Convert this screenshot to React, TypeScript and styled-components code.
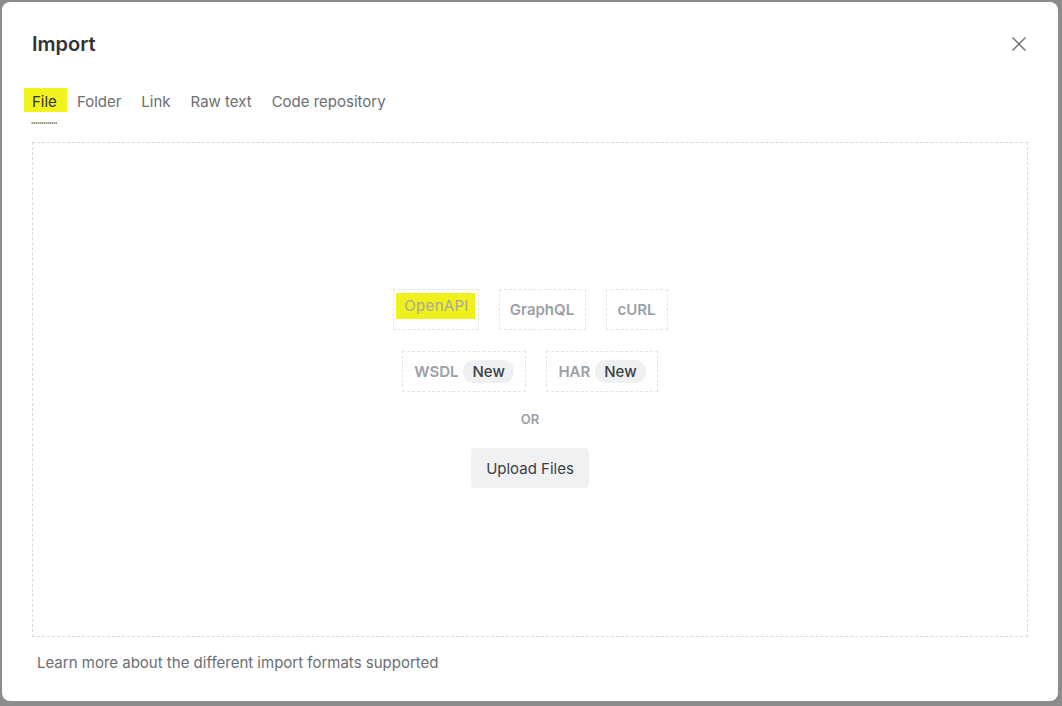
import React from "react";
import styled, { createGlobalStyle } from "styled-components";

const Global = createGlobalStyle`
  html, body { margin: 0; padding: 0; }
  body {
    width: 1062px;
    height: 706px;
    overflow: hidden;
    background: #ffffff;
    font-family: Inter, "Noto Sans", "Liberation Sans", sans-serif;
  }
  * { box-sizing: border-box; }
`;

const Page = styled.div`
  position: relative;
  width: 1062px;
  height: 706px;
  overflow: hidden;
`;

const Overlay = styled.div`
  position: absolute;
  inset: 0;
  background: rgba(0, 0, 0, 0.45);
  padding: 2px 4px 5px 2px;
  display: flex;
`;

const Modal = styled.div`
  flex: 1;
  background: #ffffff;
  border-radius: 8px;
  display: flex;
  flex-direction: column;
  padding: 0 30px 0 30px;
`;

const Header = styled.div`
  display: flex;
  align-items: center;
  justify-content: space-between;
  height: 82px;
  padding-top: 2px;
`;

const Title = styled.h2`
  margin: 0;
  font-size: 20px;
  font-weight: 600;
  color: #2f3338;
`;

const CloseButton = styled.button`
  border: none;
  background: none;
  padding: 0;
  width: 20px;
  height: 20px;
  display: flex;
  align-items: center;
  justify-content: center;
  margin-right: -1px;
  cursor: pointer;
`;

const Tabs = styled.div`
  display: flex;
  gap: 20px;
  height: 58px;
  align-items: flex-start;
  padding-top: 6px;
`;

const Tab = styled.div<{ $active?: boolean }>`
  position: relative;
  z-index: 0;
  font-size: 15px;
  color: ${(p) => (p.$active ? "#2f3338" : "#6b6e72")};
  padding-top: 2px;
  height: 34px;
  ${(p) =>
    p.$active &&
    `
    &::before {
      content: "";
      position: absolute;
      left: -8px;
      right: -10px;
      top: -2px;
      height: 24px;
      background: #f2f21c;
      z-index: -1;
    }
    &::after {
      content: "";
      position: absolute;
      left: -1px;
      right: 0;
      top: 32px;
      height: 2px;
      background: repeating-linear-gradient(90deg, #d8d86a 0 1px, #9a9a88 1px 2px);
    }
  `}
`;

const DropZone = styled.div`
  height: 495px;
  border: 1px dashed #d9d9d9;
  display: flex;
  flex-direction: column;
  align-items: center;
  justify-content: center;
  padding-bottom: 2px;
`;

const Row = styled.div`
  display: flex;
  gap: 20px;
  margin-bottom: 21px;
`;

const FormatButton = styled.div<{ $width: number }>`
  width: ${(p) => p.$width}px;
  height: 41px;
  border: 1px dashed #e4e4e4;
  display: flex;
  align-items: center;
  justify-content: center;
  gap: 5px;
  font-size: 15px;
  font-weight: 600;
  color: #9aa0a6;
`;

const Highlight = styled.span`
  background: #f0f01a;
  color: #a8a8a0;
  font-weight: 400;
  padding: 3px 6px 4px 8px;
  margin-top: -8px;
  letter-spacing: 0.3px;
`;

const Badge = styled.span`
  background: #eef0f2;
  color: #3a3f45;
  font-weight: 500;
  font-size: 15px;
  border-radius: 11px;
  padding: 2px 9px;
`;

const OrLabel = styled.div`
  font-size: 13px;
  font-weight: 600;
  color: #9aa0a6;
  margin-top: -2px;
  margin-bottom: 21px;
`;

const UploadButton = styled.button`
  width: 118px;
  height: 40px;
  border: none;
  border-radius: 4px;
  background: #f0f1f2;
  font-family: inherit;
  font-size: 15px;
  color: #3a3f45;
  cursor: pointer;
`;

const Footer = styled.div`
  padding: 16px 0 0 5px;
  font-size: 15px;
  color: #6b6e72;
`;

export default function App() {
  return (
    <Page>
      <Global />
      <Overlay>
        <Modal>
          <Header>
            <Title>Import</Title>
            <CloseButton aria-label="Close">
              <svg width="16" height="16" viewBox="0 0 16 16">
                <path d="M1.5 1.5 L14.5 14.5 M14.5 1.5 L1.5 14.5" stroke="#6f6f6f" strokeWidth="1.4" fill="none" />
              </svg>
            </CloseButton>
          </Header>
          <Tabs>
            <Tab $active>File</Tab>
            <Tab>Folder</Tab>
            <Tab>Link</Tab>
            <Tab>Raw text</Tab>
            <Tab>Code repository</Tab>
          </Tabs>
          <DropZone>
            <Row>
              <FormatButton $width={86}>
                <Highlight>OpenAPI</Highlight>
              </FormatButton>
              <FormatButton $width={87}>GraphQL</FormatButton>
              <FormatButton $width={62}>cURL</FormatButton>
            </Row>
            <Row>
              <FormatButton $width={124}>
                WSDL <Badge>New</Badge>
              </FormatButton>
              <FormatButton $width={112}>
                HAR <Badge>New</Badge>
              </FormatButton>
            </Row>
            <OrLabel>OR</OrLabel>
            <UploadButton>Upload Files</UploadButton>
          </DropZone>
          <Footer>Learn more about the different import formats supported</Footer>
        </Modal>
      </Overlay>
    </Page>
  );
}
